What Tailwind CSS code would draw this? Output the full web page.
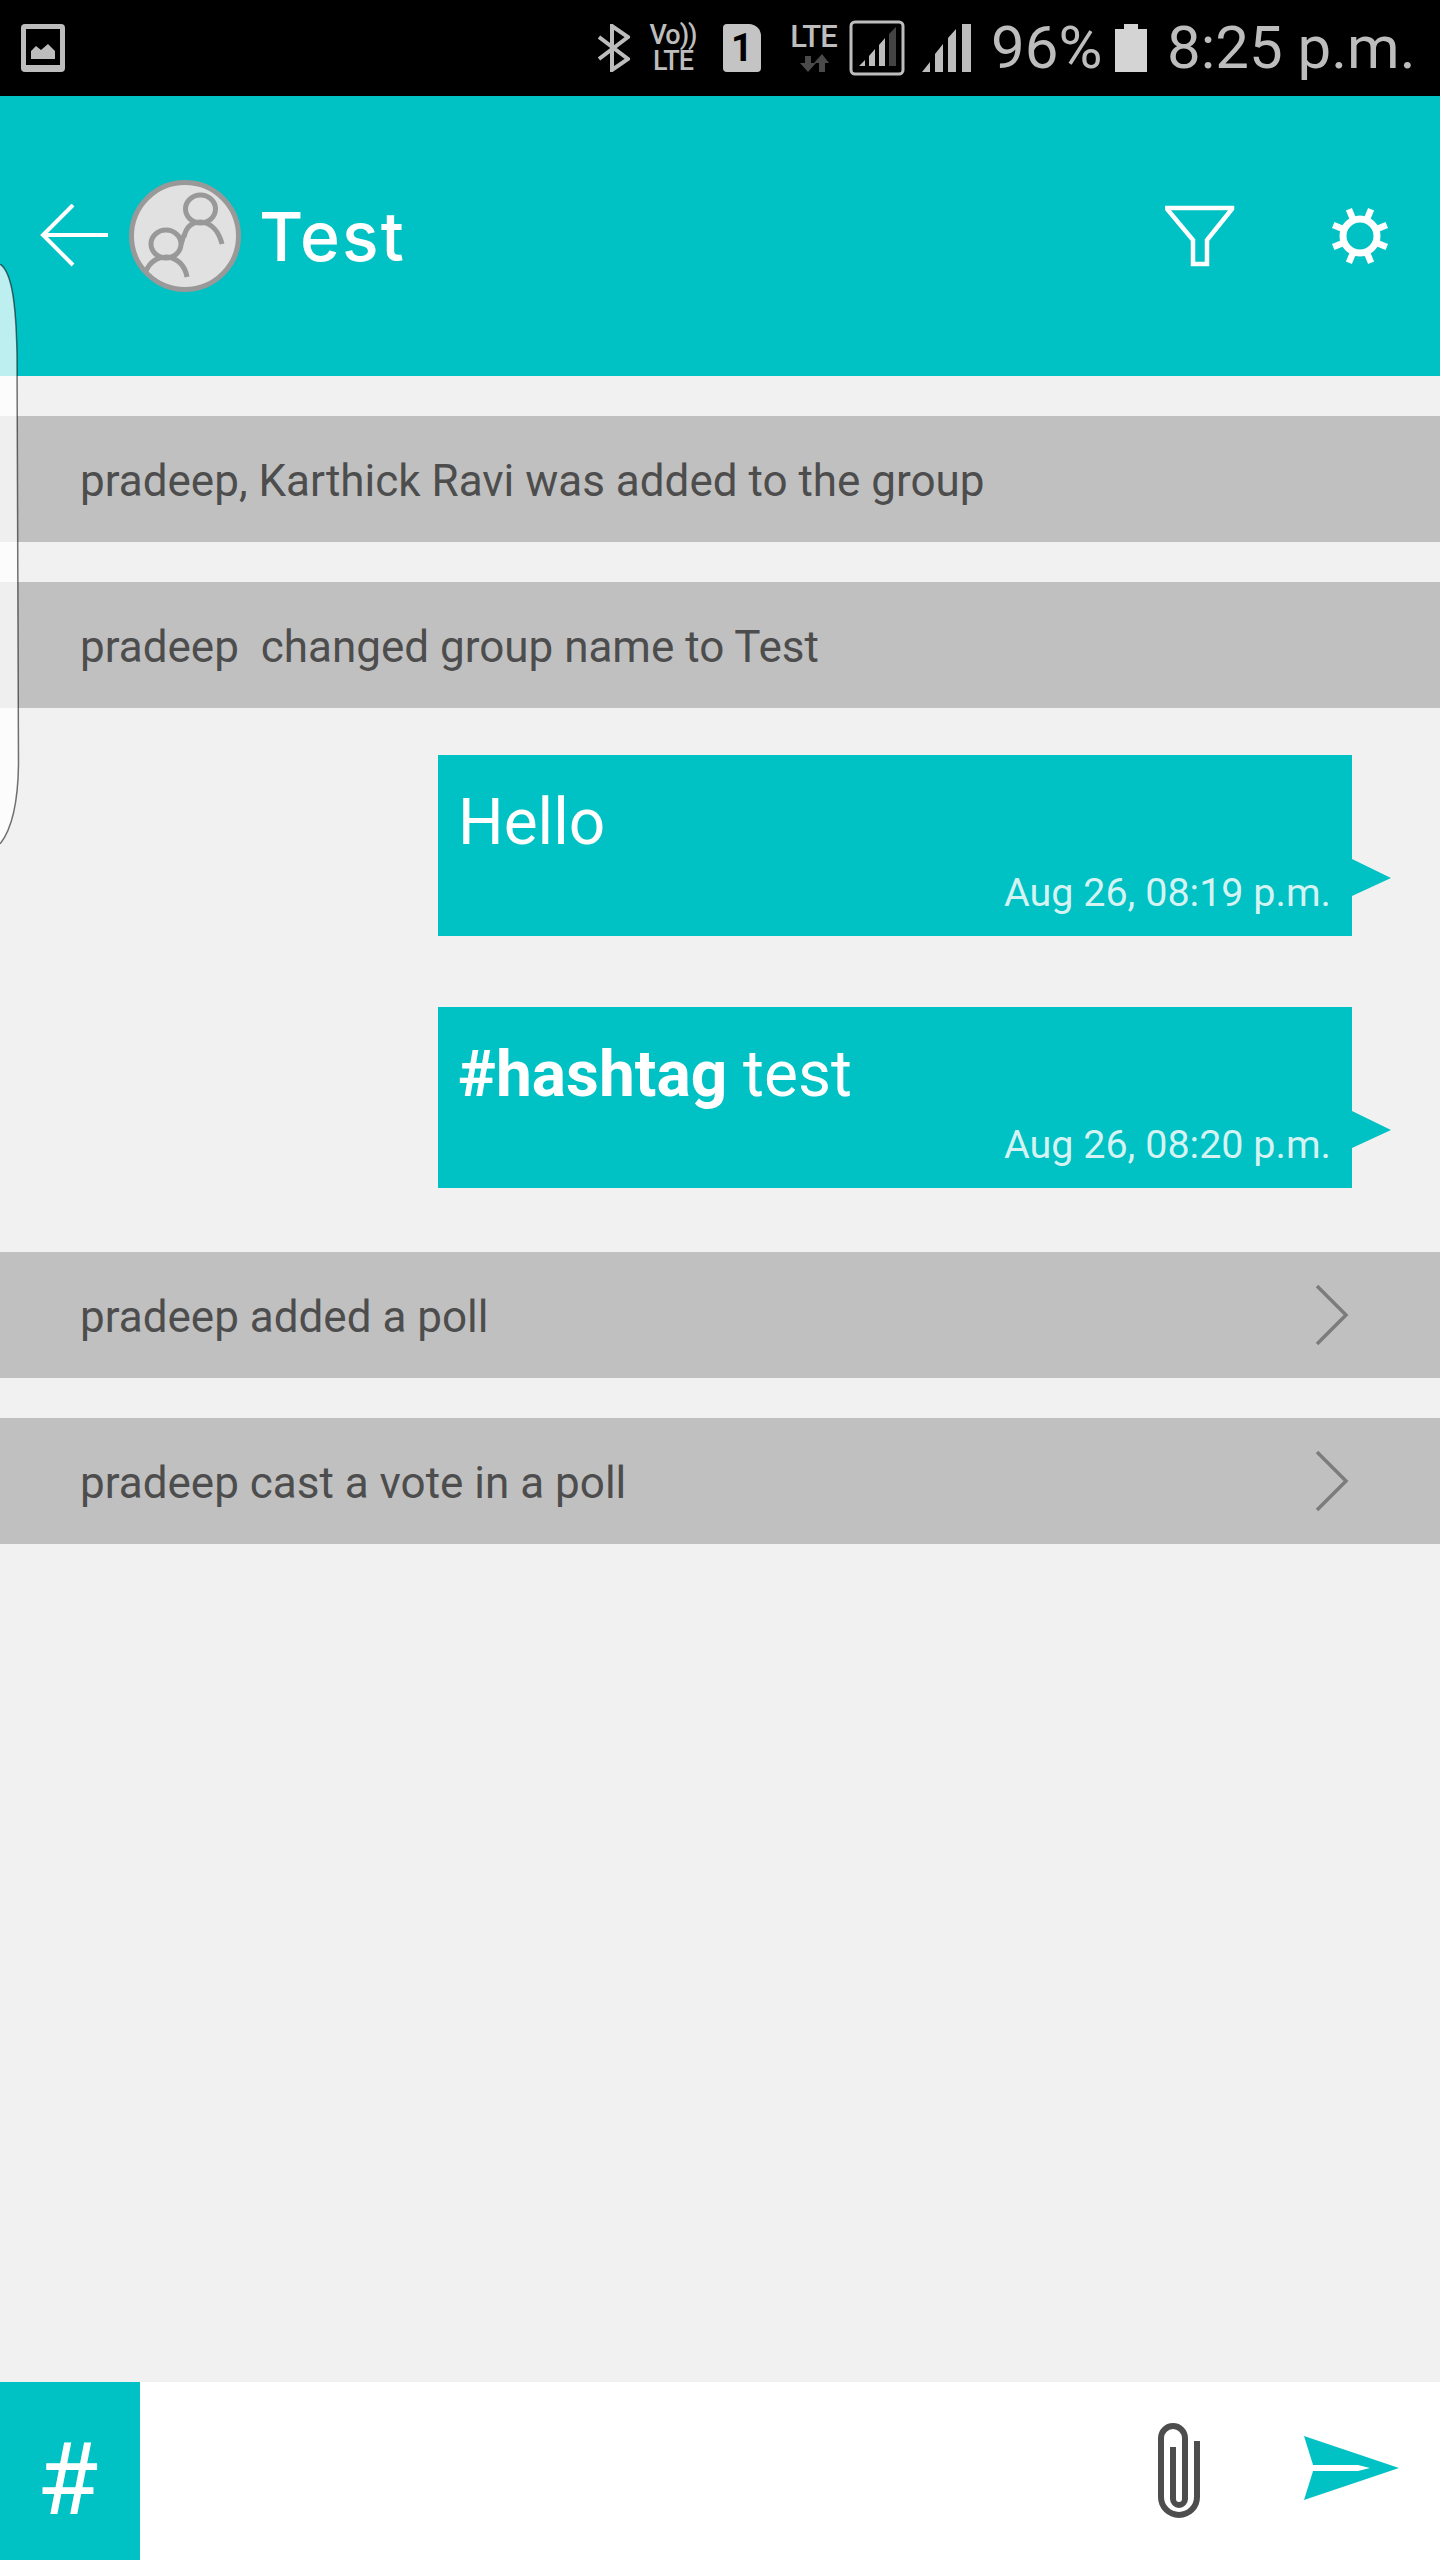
<!DOCTYPE html>
<html lang="en">
<head>
    <meta charset="UTF-8">
    <meta name="viewport" content="width=device-width, initial-scale=1.0">
    <title>Test</title>
    <script src="https://cdn.jsdelivr.net/npm/@tailwindcss/browser@4"></script>
</head>
<body class="bg-[#f1f1f1]">
<div class="relative w-[1440px] h-[2560px] flex flex-col overflow-hidden font-['Roboto',sans-serif]">

    <!-- Status bar -->
    <div class="h-24 bg-black flex items-center shrink-0 text-[#bdbdbd]">
        <svg class="ml-[21px] w-[44px] h-[48px]" viewBox="0 0 44 48">
            <rect x="0" y="0" width="44" height="48" rx="4" fill="#bdbdbd"/>
            <rect x="5" y="5" width="34" height="36" fill="#000"/>
            <path d="M10 35 V27 L15 22 L20 26 L27 20 L34 27 V35 Z" fill="#bdbdbd"/>
        </svg>
        <svg class="ml-[533px] w-[32px] h-[48px]" viewBox="0 0 32 48" fill="none" stroke="#bdbdbd" stroke-width="4">
            <path d="M1 13 L30 35 L14 46 V2 L30 13 L1 35"/>
        </svg>
        <div class="ml-[19px] w-[48px] h-[52px] flex flex-col items-center font-medium text-[27px] leading-[26px] tracking-[-1px]">
            <span>Vo))</span>
            <span>LTE</span>
        </div>
        <div class="ml-[26px] w-[38px] h-[48px] flex items-center justify-center bg-[#c4c4c4] rounded-[4px] rounded-tr-[12px] text-black text-[38px] leading-none font-bold">1</div>
        <div class="ml-[27px] w-[51px] flex flex-col items-center">
            <span class="font-medium text-[31px] leading-[24px] tracking-[-1px]">LTE</span>
            <svg class="mt-[5px] w-[30px] h-[18px]" viewBox="0 0 30 18" fill="#4a4a4a">
                <path d="M6 2 H12 V9 H17 L9 18 L1 9 H6 Z"/>
                <path d="M20 18 H26 V9 H30 L23 0 L15 9 H20 Z"/>
            </svg>
        </div>
        <svg class="ml-[10px] w-[56px] h-[56px]" viewBox="0 0 56 56">
            <rect x="2" y="2" width="52" height="52" rx="4" fill="none" stroke="#bdbdbd" stroke-width="3"/>
            <path d="M10 46 L16 40 V46 Z M20 46 V36 L26 29 V46 Z M30 46 V25 L36 18 V46 Z" fill="#bdbdbd"/>
            <path d="M40 46 V14 L47 7 V46 Z" fill="#444"/>
        </svg>
        <svg class="ml-[17px] w-[49px] h-[48px]" viewBox="0 0 49 48" fill="#bdbdbd">
            <path d="M0 48 L8 38 V48 Z M13 48 V30 L21 20 V48 Z M26 48 V14 L34 5 V48 Z M40 48 V0 L49 0 V48 Z"/>
        </svg>
        <span class="ml-5 w-[110px] text-[60px] leading-none font-normal whitespace-nowrap">96%</span>
        <svg class="ml-[14px] w-[32px] h-[48px]" viewBox="0 0 32 48" fill="#d4d4d4">
            <path d="M9 0 H23 V5 H32 V48 H0 V5 H9 Z"/>
        </svg>
        <span class="ml-5 text-[60px] leading-none font-normal whitespace-nowrap">8:25 p.m.</span>
    </div>

    <!-- Header -->
    <div class="h-[280px] bg-[#00c1c3] flex items-center shrink-0 relative">
        <svg class="ml-[40px] w-[70px] h-[64px]" viewBox="40 205 70 64" fill="none" stroke="#fff" stroke-width="4">
            <path d="M108 236 H43 M73 206 L43 236 L73 266"/>
        </svg>
        <svg class="ml-[19px] w-[112px] h-[112px]" viewBox="129 179 112 112" fill="none" stroke="#999" stroke-width="5">
            <circle cx="185" cy="235" r="53.5" fill="#e1e1e1"/>
            <ellipse cx="200.5" cy="208" rx="15" ry="14"/>
            <path d="M184 236 C186 226 192 221 201 221 C212 222 219 231 222 243"/>
            <ellipse cx="166" cy="243" rx="15" ry="14"/>
            <path d="M146 270 C150 261 157 256 167 256 C177 257 185 264 187 276"/>
            <path d="M181 243 C183 238 183 236 184 234"/>
        </svg>
        <span class="ml-[18px] text-[68px] leading-none font-medium tracking-[2px] font-['Inter',sans-serif] text-white">Test</span>
        <svg class="ml-auto w-[70px] h-[62px]" viewBox="1165 205 70 62" fill="none" stroke="#fff" stroke-width="4.5">
            <path d="M1167 208 H1232 V209 L1207 240 V264 H1193 V240 L1167 209 Z"/>
        </svg>
        <svg class="ml-[96px] mr-[51px] w-[58px] h-[58px]" viewBox="-29 -29 58 58" fill="none" stroke="#fff" stroke-width="6.5">
            <ellipse cx="0" cy="0" rx="17" ry="17" stroke-width="7"/>
            <path d="M6.5 15.7 L11.1 26.8 M15.7 6.5 L26.8 11.1 M-6.5 15.7 L-11.1 26.8 M-15.7 6.5 L-26.8 11.1 M6.5 -15.7 L11.1 -26.8 M15.7 -6.5 L26.8 -11.1 M-6.5 -15.7 L-11.1 -26.8 M-15.7 -6.5 L-26.8 -11.1"/>
        </svg>
    </div>

    <!-- Conversation -->
    <div class="flex-1 pt-10 flex flex-col">
        <div class="h-[126px] bg-[#c0c0c0] flex items-center pl-[80px] pt-1 text-[44px] text-[#4d4d4d] whitespace-pre">pradeep, Karthick Ravi was added to the group</div>
        <div class="mt-10 h-[126px] bg-[#c0c0c0] flex items-center pl-[80px] pt-1 text-[44px] text-[#4d4d4d] whitespace-pre">pradeep  changed group name to Test</div>

        <div class="relative mt-[47px] ml-[438px] w-[914px] h-[181px] bg-[#00c1c3] pl-5 pt-[31px] pr-[21px] text-white flex flex-col">
            <span class="text-[64px] leading-[74px]">Hello</span>
            <span class="mt-[10px] self-end text-[39.5px] leading-[46px] text-[#d5f3f3]">Aug 26, 08:19 p.m.</span>
            <svg class="absolute left-full top-[104px] w-[39px] h-[37px]" viewBox="0 0 39 37" fill="#00c1c3"><path d="M0 0 L39 19 L0 37 Z"/></svg>
        </div>
        <div class="relative mt-[71px] ml-[438px] w-[914px] h-[181px] bg-[#00c1c3] pl-5 pt-[31px] pr-[21px] text-white flex flex-col">
            <span class="text-[64px] leading-[74px]"><b class="font-bold">#hashtag</b> test</span>
            <span class="mt-[10px] self-end text-[39.5px] leading-[46px] text-[#d5f3f3]">Aug 26, 08:20 p.m.</span>
            <svg class="absolute left-full top-[104px] w-[39px] h-[37px]" viewBox="0 0 39 37" fill="#00c1c3"><path d="M0 0 L39 19 L0 37 Z"/></svg>
        </div>

        <div class="mt-16 h-[126px] bg-[#c0c0c0] flex items-center justify-between pl-[80px] pr-[91px] text-[44px] text-[#4d4d4d]">
            <span class="pt-1">pradeep added a poll</span>
            <svg class="w-[34px] h-[60px]" viewBox="0 0 34 60" fill="none" stroke="#7c7c7c" stroke-width="3.5"><path d="M2 1 L31 30 L2 59"/></svg>
        </div>
        <div class="mt-10 h-[126px] bg-[#c0c0c0] flex items-center justify-between pl-[80px] pr-[91px] text-[44px] text-[#4d4d4d]">
            <span class="pt-1">pradeep cast a vote in a poll</span>
            <svg class="w-[34px] h-[60px]" viewBox="0 0 34 60" fill="none" stroke="#7c7c7c" stroke-width="3.5"><path d="M2 1 L31 30 L2 59"/></svg>
        </div>
    </div>

    <!-- Input bar -->
    <div class="h-[178px] bg-white flex shrink-0 relative">
        <div class="w-[140px] bg-[#00c1c3] flex items-center justify-center pt-[18px] pr-[5px] text-[100px] leading-none font-normal text-white">#</div>
        <svg class="absolute left-[1155px] top-[38px] w-[48px] h-[100px]" viewBox="1155 2420 48 100" fill="none" stroke="#4d4d4d" stroke-width="6">
            <path d="M1197 2441 V2497 A18 18 0 0 1 1161 2497 V2438 A12 12 0 0 1 1185 2438 V2499 A6 6 0 0 1 1173 2499 V2447"/>
        </svg>
        <svg class="absolute left-[1304px] top-[54px] w-[96px] h-[64px]" viewBox="1304 2436 96 64">
            <path d="M1304 2436 L1399 2468 L1304 2500 L1314 2468 Z" fill="#00c1c3"/>
            <path d="M1313 2465 H1358 L1370 2468 L1358 2471 H1313 Z" fill="#fff"/>
        </svg>
    </div>

    <!-- Floating edge panel handle -->
    <svg class="absolute left-0 top-[264px] w-[22px] h-[580px]" viewBox="0 0 22 580">
        <path d="M0 0 C12 8 16 40 17 90 L18.5 500 C18 540 12 565 0 580 Z" fill="#fff" fill-opacity="0.74"/>
        <path d="M0 0 C12 8 16 40 17 90 L18.5 500 C18 540 12 565 0 580" fill="none" stroke="#000" stroke-opacity="0.55" stroke-width="1.5"/>
    </svg>
</div>
</body>
</html>
